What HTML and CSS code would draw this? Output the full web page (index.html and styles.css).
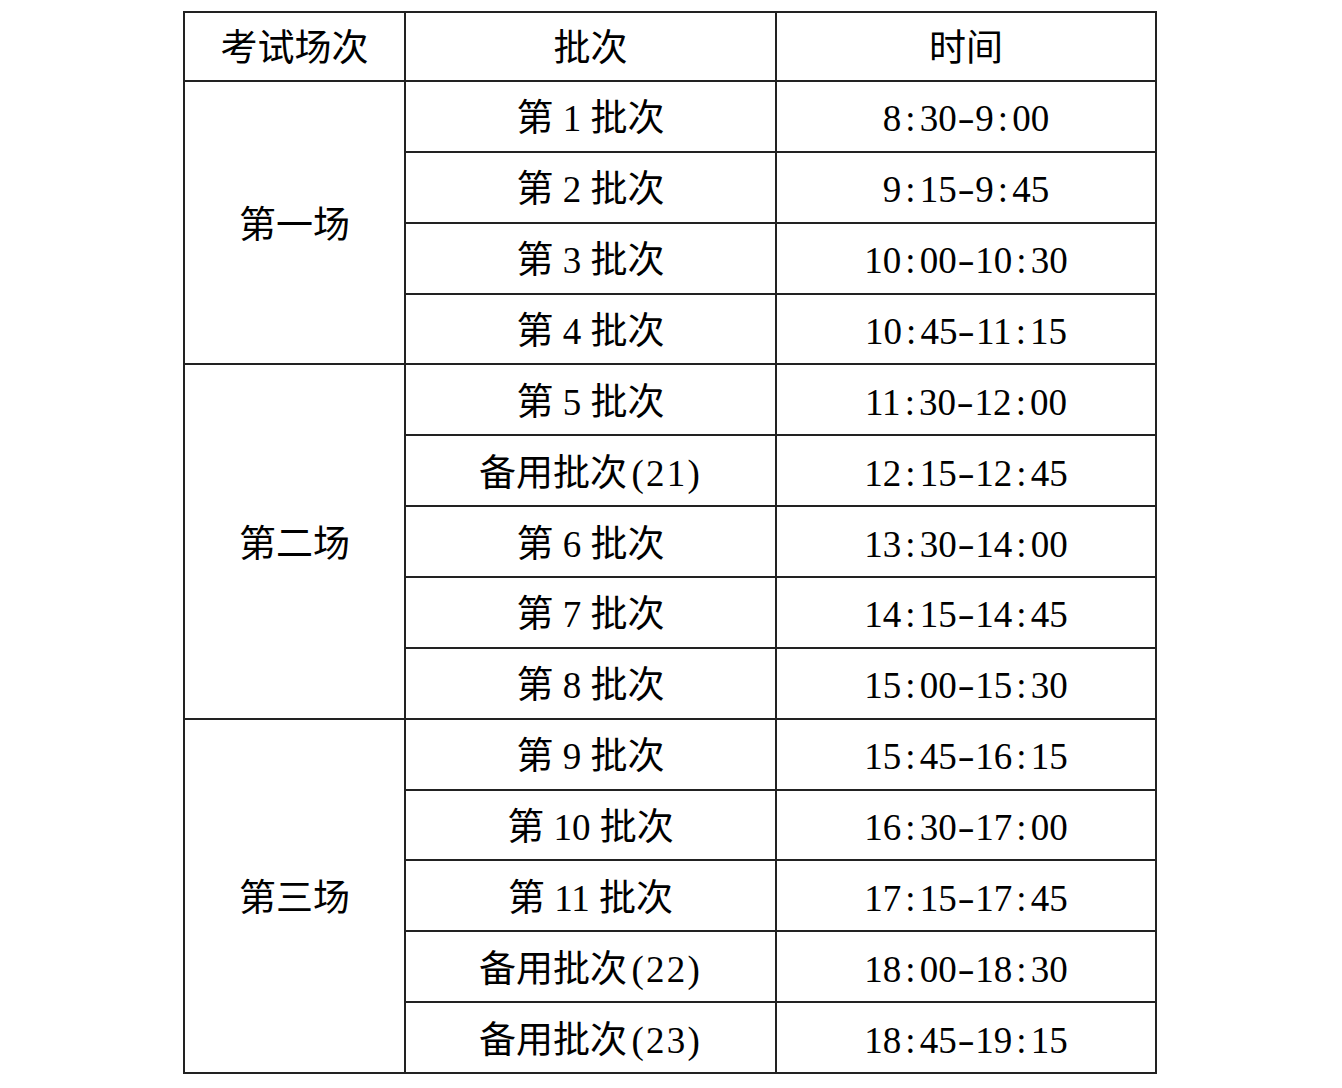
FILE: index.html
```html
<!DOCTYPE html>
<html lang="zh-CN">
<head>
<meta charset="utf-8">
<title>考试场次</title>
<link rel="stylesheet" href="styles.css">
</head>
<body>
<table class="sched">
  <colgroup>
    <col class="c1"><col class="c2"><col class="c3">
  </colgroup>
  <thead>
    <tr class="head"><th>考试场次</th><th>批次</th><th>时间</th></tr>
  </thead>
  <tbody>
    <tr><td rowspan="4">第一场</td><td>第 1 批次</td><td>8<span class="m">:</span>30<span class="m d">-</span>9<span class="m">:</span>00</td></tr>
    <tr><td>第 2 批次</td><td>9<span class="m">:</span>15<span class="m d">-</span>9<span class="m">:</span>45</td></tr>
    <tr><td>第 3 批次</td><td>10<span class="m">:</span>00<span class="m d">-</span>10<span class="m">:</span>30</td></tr>
    <tr><td>第 4 批次</td><td>10<span class="m">:</span>45<span class="m d">-</span>11<span class="m">:</span>15</td></tr>
    <tr><td rowspan="5">第二场</td><td>第 5 批次</td><td>11<span class="m">:</span>30<span class="m d">-</span>12<span class="m">:</span>00</td></tr>
    <tr><td>备用批次<span class="p">(21)</span></td><td>12<span class="m">:</span>15<span class="m d">-</span>12<span class="m">:</span>45</td></tr>
    <tr><td>第 6 批次</td><td>13<span class="m">:</span>30<span class="m d">-</span>14<span class="m">:</span>00</td></tr>
    <tr><td>第 7 批次</td><td>14<span class="m">:</span>15<span class="m d">-</span>14<span class="m">:</span>45</td></tr>
    <tr><td>第 8 批次</td><td>15<span class="m">:</span>00<span class="m d">-</span>15<span class="m">:</span>30</td></tr>
    <tr><td rowspan="5">第三场</td><td>第 9 批次</td><td>15<span class="m">:</span>45<span class="m d">-</span>16<span class="m">:</span>15</td></tr>
    <tr><td>第 10 批次</td><td>16<span class="m">:</span>30<span class="m d">-</span>17<span class="m">:</span>00</td></tr>
    <tr><td>第 11 批次</td><td>17<span class="m">:</span>15<span class="m d">-</span>17<span class="m">:</span>45</td></tr>
    <tr><td>备用批次<span class="p">(22)</span></td><td>18<span class="m">:</span>00<span class="m d">-</span>18<span class="m">:</span>30</td></tr>
    <tr><td>备用批次<span class="p">(23)</span></td><td>18<span class="m">:</span>45<span class="m d">-</span>19<span class="m">:</span>15</td></tr>
  </tbody>
</table>
</body>
</html>
```
FILE: styles.css
```css
html, body {
  margin: 0;
  padding: 0;
  background: #fff;
}
body {
  padding-top: 11px;
  padding-right: 2px;
}
.sched {
  border-collapse: collapse;
  margin: 0 auto;
  table-layout: fixed;
  width: 972px;
  font-family: "Liberation Serif", "Noto Sans CJK SC", serif;
  font-size: 37px;
  font-weight: 400;
  color: #000;
}
.c1 { width: 221px; }
.c2 { width: 371px; }
.c3 { width: 380px; }
.sched th,
.sched td {
  border: 2px solid #222;
  padding: 5px 0 0 0;
  text-align: center;
  vertical-align: middle;
  font-weight: 400;
  line-height: 1;
}
.sched .head th {
  padding-top: 3px;
}
.sched .head {
  height: 69px;
}
.sched tbody tr {
  height: 70.86px;
}
.m {
  display: inline-block;
  width: 0.5em;
  text-align: center;
}
.d {
  transform: scaleX(1.4);
}
.p {
  letter-spacing: 0.06em;
  margin-left: 0.12em;
}
```
